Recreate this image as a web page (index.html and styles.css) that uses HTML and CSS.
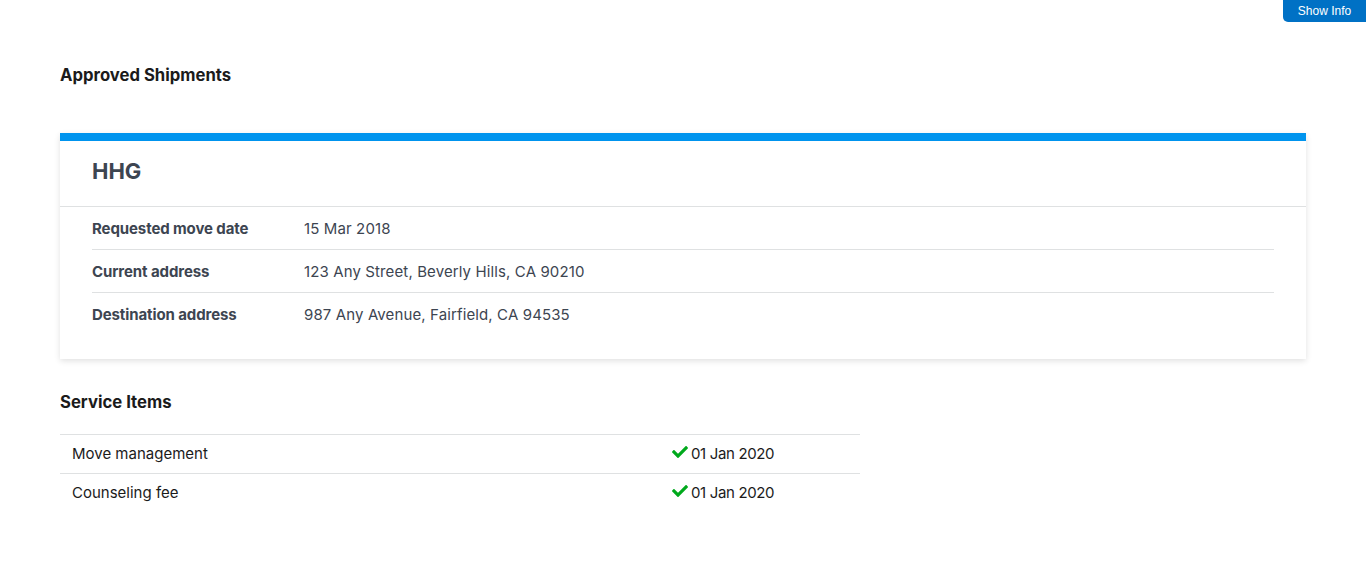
FILE: index.html
```html
<!DOCTYPE html>
<html lang="en">
<head>
<meta charset="utf-8">
<title>Approved Shipments</title>
<link rel="stylesheet" href="styles.css">
</head>
<body>
<button class="show-info" type="button">Show Info</button>
<main class="page">
  <h2 class="section-title first">Approved Shipments</h2>
  <section class="card">
    <header class="card-header"><h3>HHG</h3></header>
    <dl class="details">
      <div class="row"><dt>Requested move date</dt><dd>15 Mar 2018</dd></div>
      <div class="row"><dt>Current address</dt><dd>123 Any Street, Beverly Hills, CA 90210</dd></div>
      <div class="row"><dt>Destination address</dt><dd>987 Any Avenue, Fairfield, CA 94535</dd></div>
    </dl>
  </section>
  <h2 class="section-title">Service Items</h2>
  <table class="items">
    <tbody>
      <tr>
        <td class="name">Move management</td>
        <td class="date"><svg class="check" viewBox="0 0 512 512" aria-hidden="true"><path d="M173.9 439.4l-166.4-166.4c-10-10-10-26.2 0-36.2l36.2-36.2c10-10 26.2-10 36.2 0L192 312.7 432.1 72.6c10-10 26.2-10 36.2 0l36.2 36.2c10 10 10 26.2 0 36.2L210.1 439.4c-10 10-26.2 10-36.2 0z"/></svg>01 Jan 2020</td>
      </tr>
      <tr>
        <td class="name">Counseling fee</td>
        <td class="date"><svg class="check" viewBox="0 0 512 512" aria-hidden="true"><path d="M173.9 439.4l-166.4-166.4c-10-10-10-26.2 0-36.2l36.2-36.2c10-10 26.2-10 36.2 0L192 312.7 432.1 72.6c10-10 26.2-10 36.2 0l36.2 36.2c10 10 10 26.2 0 36.2L210.1 439.4c-10 10-26.2 10-36.2 0z"/></svg>01 Jan 2020</td>
      </tr>
    </tbody>
  </table>
</main>
</body>
</html>
```
FILE: styles.css
```css
* { box-sizing: border-box; }
html, body { margin: 0; padding: 0; background: #fff; }
body {
  font-family: "Inter", "Noto Sans", sans-serif;
  color: #1b1b1b;
  font-size: 15px;
}
.show-info {
  position: absolute;
  top: 0;
  right: 0;
  width: 83px;
  height: 22px;
  border: 0;
  border-radius: 0 0 0 5px;
  background: #0071c5;
  color: #fff;
  font-family: "Liberation Sans", Arial, sans-serif;
  font-size: 12px;
  padding: 0;
  line-height: 22px;
}
.page {
  padding: 0 60px;
}
.section-title {
  margin: 0;
  font-size: 16.7px;
  font-weight: 700;
  line-height: 22px;
  color: #1b1b1b;
}
.section-title.first { padding-top: 64px; padding-bottom: 47px; }
.card {
  border-top: 8px solid #0094ee;
  background: #fff;
  box-shadow: 0 2px 6px rgba(0,0,0,0.12);
  margin-bottom: 32px;
  padding-bottom: 23px;
}
.card-header {
  border-bottom: 1px solid #dfe1e2;
  padding: 15px 32px 20px;
}
.card-header h3 {
  margin: 0;
  font-size: 22px;
  font-weight: 700;
  line-height: 30px;
  color: #3d4551;
}
.details {
  margin: 0;
  padding: 0 32px;
}
.row {
  display: flex;
  align-items: center;
  height: 43px;
  border-bottom: 1px solid #dfe1e2;
  color: #3d4551;
}
.row:last-child { border-bottom: 0; }
.row dt {
  width: 212px;
  font-weight: 700;
  letter-spacing: -0.1px;
}
.row dd { margin: 0; letter-spacing: 0.12px; }
.items {
  margin-top: 21px;
  width: 800px;
  border-collapse: collapse;
}
.items td {
  border-top: 1px solid #dfe1e2;
  height: 39px;
  padding: 0 12px 1px;
  vertical-align: middle;
}
.items td.name { width: 600px; }
.items td.date { padding-left: 12px; white-space: nowrap; letter-spacing: -0.35px; }
.check {
  width: 16px;
  height: 16px;
  fill: #00a91c;
  vertical-align: -1px;
  margin-right: 3px;
}
```
